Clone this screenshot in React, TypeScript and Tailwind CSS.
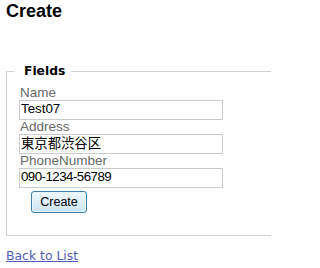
import React from "react";

export default function App() {
  const arial = { fontFamily: '"Liberation Sans", Arial, sans-serif' };
  return (
    <div className="w-[271px] h-[268px] overflow-hidden bg-white pt-[1px]" style={arial}>
      <h2 className="pl-[6px] text-[18px] leading-[21px] font-bold text-black">Create</h2>
      <fieldset className="mt-[42px] ml-[6px] border border-r-0 border-[#d3d3d3] pl-[7px] pt-[7px] pb-[22px]">
        <legend className="pl-[10px] pr-[6px] text-[12.3px] leading-[15px] font-bold text-black font-['DejaVu_Sans',Verdana,sans-serif]">
          Fields
        </legend>
        <div className="pl-[5px] flex flex-col items-start">
          <div className="text-[13.5px] leading-[14px] text-[#696969] pl-[1px]">Name</div>
          <input
            type="text"
            defaultValue="Test07"
            className="w-[204px] h-[20px] border border-[#cccccc] pl-[1px] pt-0 pb-[3px] text-[13.33px] leading-[15px] text-black outline-none"
            style={arial}
          />
          <div className="text-[13.5px] leading-[14px] text-[#696969] pl-[1px]">Address</div>
          <input
            type="text"
            defaultValue="東京都渋谷区"
            className="w-[204px] h-[20px] border border-[#cccccc] pl-[1px] pt-0 pb-[3px] text-[13.33px] leading-[15px] text-black outline-none"
            style={{ fontFamily: '"Liberation Sans", Arial, "Noto Sans CJK JP", sans-serif' }}
          />
          <div className="text-[13.5px] leading-[14px] text-[#696969] pl-[1px]">PhoneNumber</div>
          <input
            type="text"
            defaultValue="090-1234-56789"
            className="w-[204px] h-[20px] border border-[#cccccc] pl-[1px] pt-0 pb-[3px] text-[13.33px] leading-[15px] tracking-[-0.55px] text-black outline-none"
            style={arial}
          />
          <button
            type="button"
            className="mt-[3px] ml-[12px] w-[56px] h-[22px] rounded-[3px] border border-[#3c7fb1] bg-gradient-to-b from-[#f0f8fd] to-[#c9e5f6] text-[12.5px] leading-[14px] text-black shadow-[inset_0_0_0_1px_#e8f4fc]"
            style={arial}
          >
            Create
          </button>
        </div>
      </fieldset>
      <div className="mt-[12px] pl-[6px] text-[12.4px] leading-[15px] font-['DejaVu_Sans',Verdana,sans-serif]">
        <a href="#" className="text-[#505abc] underline">
          Back to List
        </a>
      </div>
    </div>
  );
}
